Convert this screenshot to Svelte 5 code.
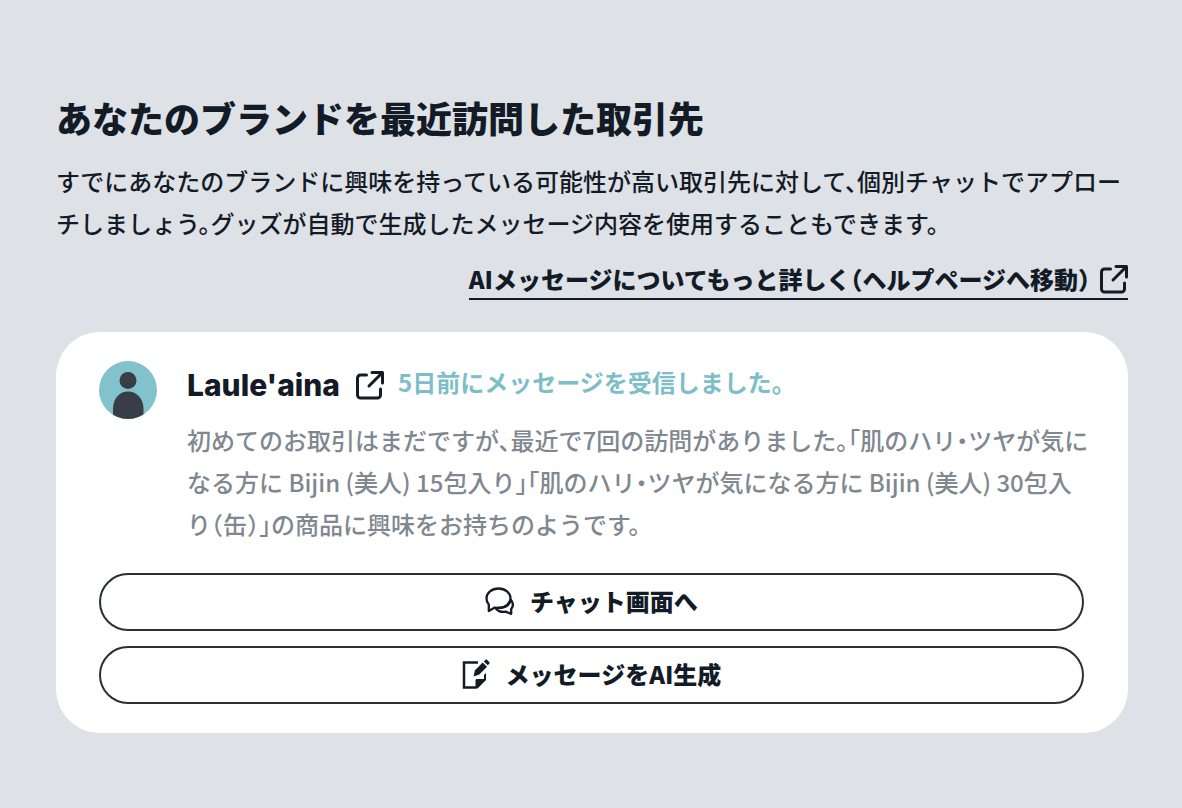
<script lang="ts">
	interface Visitor {
		name: string;
		status: string;
		description: string;
	}

	const visitors: Visitor[] = [
		{
			name: "Laule'aina",
			status: '5日前にメッセージを受信しました。',
			description:
				'初めてのお取引はまだですが、最近で7回の訪問がありました。「肌のハリ・ツヤが気になる方に Bijin (美人) 15包入り」「肌のハリ・ツヤが気になる方に Bijin (美人) 30包入り（缶）」の商品に興味をお持ちのようです。'
		}
	];
</script>

{#snippet externalIcon()}
	<svg class="external" viewBox="0 0 28 28" aria-hidden="true">
		<path d="M10.500 4H4.500a3 3 0 0 0-3 3v17a3 3 0 0 0 3 3h17a3 3 0 0 0 3-3v-6" />
		<path d="M13 15 26 2M16 1.500h10.500V12" />
	</svg>
{/snippet}

<section class="visitors">
	<h2>あなたのブランドを最近訪問した取引先</h2>
	<p class="lead">
		すでにあなたのブランドに興味を持っている可能性が高い取引先に対して、個別チャットでアプローチしましょう。グッズが自動で生成したメッセージ内容を使用することもできます。
	</p>
	<div class="help">
		<a href="#help">
			AIメッセージについてもっと詳しく（ヘルプページへ移動）
			{@render externalIcon()}
		</a>
	</div>

	{#each visitors as visitor}
		<article class="card">
			<div class="profile">
				<svg class="avatar" viewBox="0 0 58 58" aria-hidden="true">
					<clipPath id="avatar-clip"><circle cx="29" cy="29" r="29" /></clipPath>
					<g clip-path="url(#avatar-clip)">
						<rect width="58" height="58" fill="#81c2cc" />
						<circle cx="29" cy="19.500" r="8.500" fill="#373e49" />
						<path d="M14 60V48c0-10 6-17.500 15-17.500S44.500 38 44.500 48v12z" fill="#373e49" />
					</g>
				</svg>
				<div class="details">
					<div class="title">
						<a class="name" href="#profile">
							{visitor.name}
							{@render externalIcon()}
						</a>
						<span class="status">{visitor.status}</span>
					</div>
					<p class="description">{visitor.description}</p>
				</div>
			</div>

			<div class="actions">
				<button type="button">
					<svg class="chat" viewBox="0 0 29 28" aria-hidden="true">
						<path
							d="M13.500 1.500C6.800 1.500 1.500 5.800 1.500 11.200c0 3 .8 4.800 2.300 6.300V24l6-3.500c1.200.3 2.400.4 3.700.4 6.700 0 12-4.300 12-9.700s-5.300-9.700-12-9.700z"
						/>
						<path d="M26 13c2.300 3 2.300 6.500.2 9v4.800L20.500 24.700c-3.800.7-7.300-.4-9.400-3l1.800-.8c5 0 10.500-1.500 12.500-6.500" />
					</svg>
					チャット画面へ
				</button>
				<button type="button">
					<svg class="memo" viewBox="0 0 28 30" aria-hidden="true">
						<path class="line" d="M16 3.500H2v25h12" />
						<path d="M24 14v7l-8.500 8.500h-2V21c0-1 1-1 2-1h6.500v-4z" />
						<path d="M11.500 17.500 13 11.200 20.700 3.500l4.300 4.300-7.700 7.700z" />
						<path d="m21.800 2.400 1.500-1.500c.6-.6 1.300-.6 1.900 0l2 2c.6.600.6 1.300 0 1.900l-1.400 1.500z" />
					</svg>
					メッセージをAI生成
				</button>
			</div>
		</article>
	{/each}
</section>

<style>
	:global(body) {
		background: #dee1e6;
	}

	.visitors {
		padding: 90px 54px 75px 56px;
		color: #131b26;
		font-family: 'Noto Sans CJK JP', sans-serif;
		font-size: 24px;
		font-weight: 500;
		line-height: 42px;
		/* set punctuation and brackets half width */
		font-feature-settings: 'halt';
	}

	h2 {
		margin: 0 0 16px;
		font-size: 36px;
		font-weight: 900;
		line-height: 54px;
	}

	p {
		margin: 0;
	}

	a {
		color: inherit;
		text-decoration: none;
	}

	.help {
		display: flex;
		justify-content: flex-end;
		margin: 16px 0 32px;
	}

	.help a {
		display: flex;
		align-items: center;
		gap: 10px;
		border-bottom: 2px solid #131b26;
		font-weight: 900;
		line-height: 38px;
	}

	.external {
		flex: none;
		width: 28px;
		height: 28px;
		fill: none;
		stroke: currentColor;
		stroke-width: 3;
		stroke-linecap: round;
		stroke-linejoin: round;
		overflow: visible;
	}

	.card {
		padding: 29px 44px 29px 43px;
		border-radius: 44px;
		background: #fff;
	}

	.profile {
		display: flex;
		gap: 30px;
		margin-right: -8px;
	}

	.avatar {
		flex: none;
		width: 58px;
		height: 58px;
	}

	.details {
		flex: 1;
		min-width: 0;
	}

	.title {
		display: flex;
		align-items: flex-start;
		flex-wrap: wrap;
		column-gap: 14px;
		margin-bottom: 10px;
	}

	.name {
		display: flex;
		align-items: center;
		gap: 16px;
		font-family: Inter, 'Noto Sans CJK JP', sans-serif;
		font-size: 30px;
		font-weight: 800;
		line-height: 48px;
	}

	.status {
		color: #7dbec8;
		font-weight: 700;
	}

	.description {
		color: #7f8890;
	}

	.actions {
		display: flex;
		flex-direction: column;
		gap: 15px;
		margin-top: 28px;
	}

	button {
		display: flex;
		align-items: center;
		justify-content: center;
		gap: 16px;
		width: 100%;
		height: 58px;
		padding: 0 28px 2px;
		border: 2px solid #28303a;
		border-radius: 29px;
		background: #fff;
		color: #131b26;
		font: inherit;
		font-weight: 900;
		font-feature-settings: inherit;
		cursor: pointer;
	}

	.chat {
		width: 29px;
		height: 28px;
		fill: none;
		stroke: currentColor;
		stroke-width: 2.3;
		stroke-linejoin: round;
		stroke-linecap: round;
	}

	.memo {
		width: 28px;
		height: 30px;
		fill: currentColor;
	}

	.memo .line {
		fill: none;
		stroke: currentColor;
		stroke-width: 2.5;
	}
</style>
